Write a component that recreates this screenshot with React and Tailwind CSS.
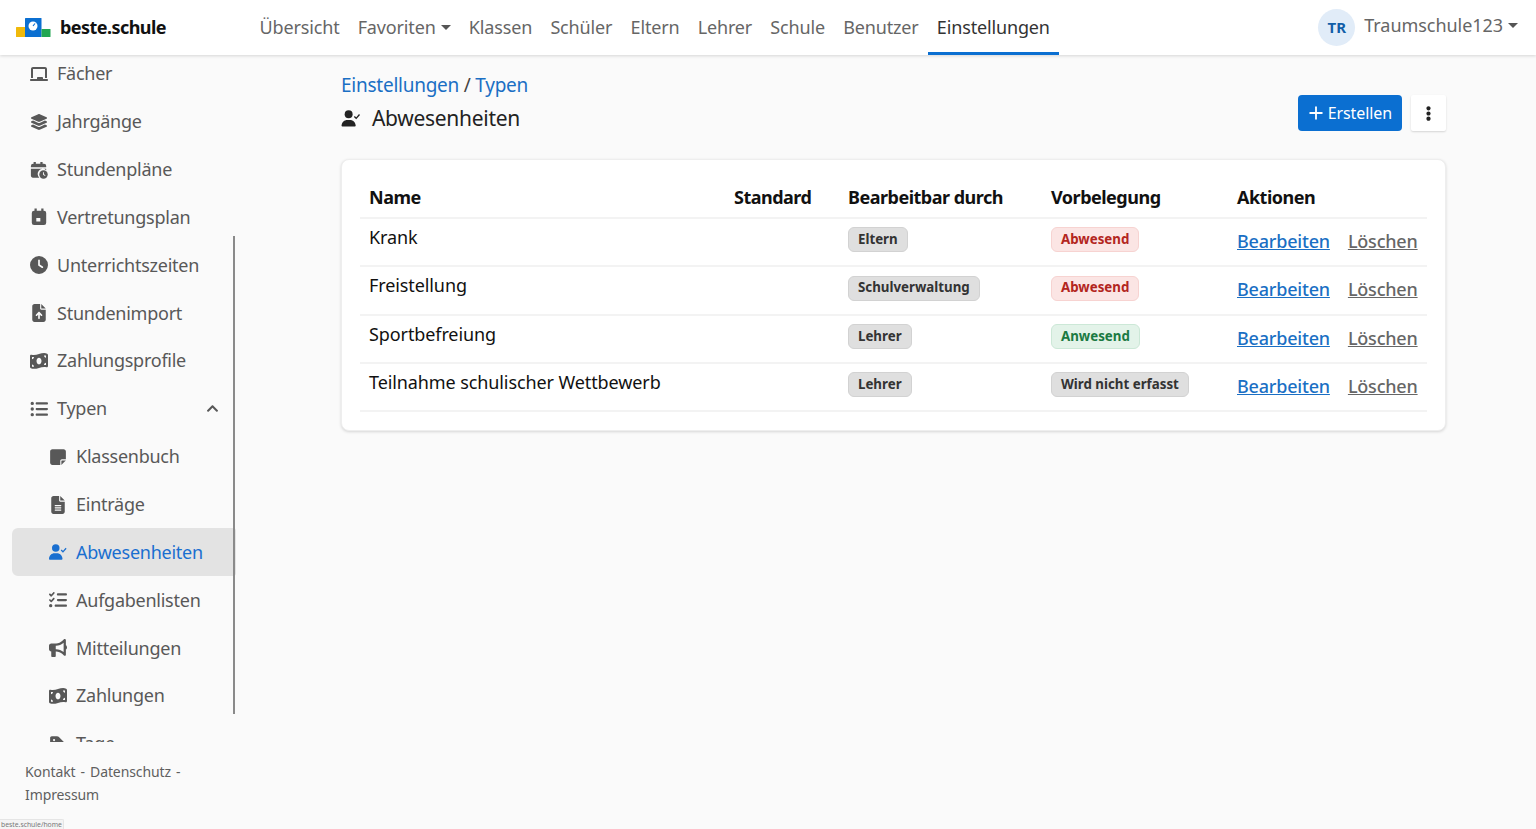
import React from "react";
import { FaChevronUp, FaEllipsisV } from "react-icons/fa";
import {
    FaBullhorn,
    FaChalkboard,
    FaClock,
    FaFileArrowUp,
    FaFileLines,
    FaLayerGroup,
    FaListCheck,
    FaListUl,
    FaMoneyBillWave,
    FaNoteSticky,
    FaTag,
} from "react-icons/fa6";
import { Plus } from "lucide-react";

const CalendarClock = ({ className }) => (
    <svg viewBox="0 0 20 20" className={className} fill="currentColor">
        <path d="M4 1h2.500v2h5V1H14v2h1.500A2.500 2.500 0 0 1 18 5.500V7H1V5.500A2.500 2.500 0 0 1 3.500 3H4z" />
        <path d="M1 8.500h17v1.700a5.500 5.500 0 0 0-7.700 8.300H3A2 2 0 0 1 1 16.500z" />
        <circle cx="15" cy="15" r="4.700" />
        <path d="M14.500 12.500h1v2.300l1.700 1-.5.800-2.200-1.300z" fill="#fafafa" />
    </svg>
);

const CalendarSolid = ({ className }) => (
    <svg viewBox="0 0 20 20" className={className} fill="currentColor">
        <path
            fillRule="evenodd"
            d="M5 .5h2.500V3h5V.5H15V3h.5A2.500 2.500 0 0 1 18 5.500v11a2.500 2.500 0 0 1-2.500 2.500h-11A2.500 2.500 0 0 1 2 16.500v-11A2.500 2.500 0 0 1 4.500 3H5zM7 11v4h4.500v-4z"
        />
    </svg>
);

const UserTick = ({ className }) => (
    <svg viewBox="0 0 20 18" className={className} fill="currentColor">
        <circle cx="7.500" cy="4.500" r="4.200" />
        <path d="M0 17a1 1 0 0 1-.0-.5C.3 12.800 3 10.500 6 10.500h3c3 0 5.700 2.300 6 6a1 1 0 0 1-1 1H1a1 1 0 0 1-1-.5z" />
        <path d="M13.500 6.800l2 2 3.500-4" fill="none" stroke="currentColor" strokeWidth="1.400" />
    </svg>
);

// stretched a little, the bill is taller in the picture
const MoneyBill = ({ className }) => (
    <FaMoneyBillWave className={className} preserveAspectRatio="none" />
);

const Logo = () => (
    <svg viewBox="0 0 35 20" className="w-[35px] h-[20px] shrink-0">
        <rect x="0" y="9" width="10" height="10" fill="#f0b90b" rx="0.500" />
        <rect x="9" y="0" width="16.500" height="19" fill="#0b6fd1" rx="0.500" />
        <rect x="25.500" y="11" width="9" height="8" fill="#22a652" rx="0.500" />
        <circle cx="17" cy="8" r="4.500" fill="#fff" />
        <path d="M17 8l2-2.500" stroke="#0b6fd1" strokeWidth="1.200" />
    </svg>
);

const topNav = [
    { label: "Übersicht" },
    { label: "Favoriten", caret: true },
    { label: "Klassen" },
    { label: "Schüler" },
    { label: "Eltern" },
    { label: "Lehrer" },
    { label: "Schule" },
    { label: "Benutzer" },
    { label: "Einstellungen", active: true },
];

const sideItems = [
    { label: "Fächer", icon: FaChalkboard },
    { label: "Jahrgänge", icon: FaLayerGroup },
    { label: "Stundenpläne", icon: CalendarClock },
    { label: "Vertretungsplan", icon: CalendarSolid },
    { label: "Unterrichtszeiten", icon: FaClock },
    { label: "Stundenimport", icon: FaFileArrowUp },
    { label: "Zahlungsprofile", icon: MoneyBill },
    { label: "Typen", icon: FaListUl, open: true },
    { label: "Klassenbuch", icon: FaNoteSticky, sub: true },
    { label: "Einträge", icon: FaFileLines, sub: true },
    { label: "Abwesenheiten", icon: UserTick, sub: true, active: true },
    { label: "Aufgabenlisten", icon: FaListCheck, sub: true },
    { label: "Mitteilungen", icon: FaBullhorn, sub: true },
    { label: "Zahlungen", icon: MoneyBill, sub: true },
    { label: "Tage", icon: FaTag, sub: true },
];

const rows = [
    { name: "Krank", by: "Eltern", pre: "Abwesend", tone: "red" },
    { name: "Freistellung", by: "Schulverwaltung", pre: "Abwesend", tone: "red" },
    { name: "Sportbefreiung", by: "Lehrer", pre: "Anwesend", tone: "green" },
    { name: "Teilnahme schulischer Wettbewerb", by: "Lehrer", pre: "Wird nicht erfasst", tone: "gray" },
];

const Badge = ({ tone = "gray", children }) => {
    const tones = {
        gray: "bg-[#dfdfdf] border-[#d2d2d2] text-[#333333]",
        red: "bg-[#fbe5e4] border-[#f7d3d1] text-[#b3261e]",
        green: "bg-[#e3f3e9] border-[#cce8d7] text-[#1b7a43]",
    };
    return (
        <span
            className={
                "inline-flex items-center h-[25px] px-[9px] rounded-[6px] border text-[13.300px] font-bold whitespace-nowrap " +
                tones[tone]
            }
        >
            {children}
        </span>
    );
};

const SideItem = ({ item }) => {
    const Icon = item.icon;
    return (
        <div
            className={
                "flex items-center h-[47.850px] shrink-0 ml-3 rounded-l-[6px] rounded-r-[3px] " +
                (item.sub ? "pl-[37px] " : "pl-[18px] ") +
                (item.active ? "bg-[#e3e3e3] text-[#1a6fd0]" : "text-[#585858]")
            }
        >
            <span className="w-[18px] h-[18px] flex items-center justify-center shrink-0">
                <Icon className="w-[18px] h-[18px]" />
            </span>
            <span className="ml-[9px] text-[18px] tracking-[-0.25px]">{item.label}</span>
            {item.open && <FaChevronUp className="w-[13px] h-[13px] ml-auto mr-[17px]" />}
        </div>
    );
};

export default function App() {
    return (
        <div className="relative h-[829px] overflow-hidden flex flex-col bg-[#fafafa] font-['Noto_Sans',sans-serif]">
            <header className="relative z-10 h-[55px] shrink-0 flex items-center bg-white shadow-[0_1px_3px_rgba(0,0,0,0.15)]">
                <div className="flex items-center w-[250.400px] pl-4 shrink-0">
                    <Logo />
                    <span className="ml-[9px] text-[18px] font-bold text-[#111111] tracking-[-0.55px]">beste.schule</span>
                </div>
                <nav className="flex h-full">
                    {topNav.map((n) => (
                        <div
                            key={n.label}
                            className={
                                "flex items-center h-full px-[9.100px] text-[18px] tracking-[-0.15px] border-b-[3px] pt-[2px] " +
                                (n.active ? "border-[#0b6fd1] text-[#333333]" : "border-transparent text-[#666666]")
                            }
                        >
                            {n.label}
                            {n.caret && (
                                <span className="ml-[5px] w-0 h-0 border-x-[5px] border-t-[5px] border-x-transparent border-t-[#555555]" />
                            )}
                        </div>
                    ))}
                </nav>
                <div className="ml-auto flex items-center pr-[18px]">
                    <span className="w-[37px] h-[37px] rounded-full bg-[#e1ecf8] text-[#125ea8] flex items-center justify-center text-[15px] font-bold">
                        TR
                    </span>
                    <span className="ml-[9px] text-[18px] text-[#666666] tracking-[-0.05px] -mt-[5px]">Traumschule123</span>
                    <span className="ml-[5px] -mt-[5px] w-0 h-0 border-x-[5px] border-t-[5px] border-x-transparent border-t-[#555555]" />
                </div>
            </header>

            <div className="flex flex-1 min-h-0">
                <aside className="relative w-[236px] shrink-0 flex flex-col">
                    <div className="flex-1 min-h-0 overflow-hidden">
                        <div className="flex flex-col -mt-[5px]">
                            {sideItems.map((item) => (
                                <SideItem key={item.label} item={item} />
                            ))}
                        </div>
                    </div>
                    <div className="h-[87px] shrink-0 pt-[18px] pl-[25px] pr-10 text-[14px] leading-[23px] text-[#5f5f5f] tracking-[-0.1px] [word-spacing:1.500px]">
                        Kontakt - Datenschutz - Impressum
                    </div>
                    {/* scrollbar thumb */}
                    <div className="absolute right-[1px] top-[181px] w-[2px] h-[478px] bg-[#8a8a8a]" />
                </aside>

                <main className="flex-1 min-w-0 pl-[105px] pr-[90px]">
                    <div className="flex items-start justify-between h-[104px]">
                        <div className="pt-[16px]">
                            <div className="text-[19px] leading-[28px] text-[#1a6fc4] tracking-[-0.25px]">
                                Einstellungen <span className="text-[#444444]">/</span> Typen
                            </div>
                            <div className="flex items-center mt-[3px] text-[#222222]">
                                <UserTick className="w-[20px] h-[17px]" />
                                <span className="ml-[11px] text-[21px] leading-[32px] tracking-[-0.3px]">Abwesenheiten</span>
                            </div>
                        </div>
                        <div className="flex items-center mt-[40px]">
                            <button className="flex items-center h-9 pl-[8px] pr-[10px] rounded-[4px] bg-[#0b6fd1] text-white text-[16px] tracking-[-0.1px]">
                                <Plus className="w-[20px] h-[20px] mr-[2px]" strokeWidth={2.2} />
                                Erstellen
                            </button>
                            <button className="ml-[9px] w-[35px] h-9 flex items-center justify-center rounded-[2px] bg-white shadow-[0_1px_2px_rgba(0,0,0,0.15)] text-[#222222]">
                                <FaEllipsisV className="w-[15px] h-[15px]" />
                            </button>
                        </div>
                    </div>

                    <div className="rounded-[8px] bg-white border border-[#eeeeee] shadow-[0_1px_3px_rgba(0,0,0,0.15)] px-[18px] pt-[17px] pb-[18px]">
                        <table className="w-full table-fixed border-collapse text-[#111111]">
                            <thead>
                                <tr className="h-[41px] border-b-2 border-[#f3f3f3] text-[18px] text-left">
                                    <th className="w-[365px] pl-[9px] font-bold tracking-[-0.5px]">Name</th>
                                    <th className="w-[114px] pl-[9px] font-bold tracking-[-0.5px]">Standard</th>
                                    <th className="w-[203px] pl-[9px] font-bold tracking-[-0.5px]">Bearbeitbar durch</th>
                                    <th className="w-[186px] pl-[9px] font-bold tracking-[-0.5px]">Vorbelegung</th>
                                    <th className="pl-[9px] font-bold tracking-[-0.5px]">Aktionen</th>
                                </tr>
                            </thead>
                            <tbody>
                                {rows.map((r) => (
                                    <tr key={r.name} className="h-[48.300px] border-b-2 border-[#f3f3f3] align-top">
                                        <td className="pl-[9px] pt-[5px] text-[18px] leading-[27px] tracking-[-0.1px] whitespace-nowrap">{r.name}</td>
                                        <td></td>
                                        <td className="pl-[9px] pt-[7px]">
                                            <Badge>{r.by}</Badge>
                                        </td>
                                        <td className="pl-[9px] pt-[7px]">
                                            <Badge tone={r.tone}>{r.pre}</Badge>
                                        </td>
                                        <td className="pl-[9px] pt-[9px] text-[18px] leading-[27px] font-medium tracking-[-0.2px] whitespace-nowrap">
                                            <a className="underline text-[#1a6fc4]">Bearbeiten</a>
                                            <a className="underline text-[#666666] ml-[18px]">Löschen</a>
                                        </td>
                                    </tr>
                                ))}
                            </tbody>
                        </table>
                    </div>
                </main>
            </div>

            {/* browser status bubble */}
            <div className="absolute left-0 bottom-0 h-[10px] w-[64px] pl-px bg-[#f4f4f4] border-t border-r border-[#e5e5e5] rounded-tr-[2px] text-[6.800px] leading-[9px] text-[#777777] whitespace-nowrap">
                beste.schule/home
            </div>
        </div>
    );
}
